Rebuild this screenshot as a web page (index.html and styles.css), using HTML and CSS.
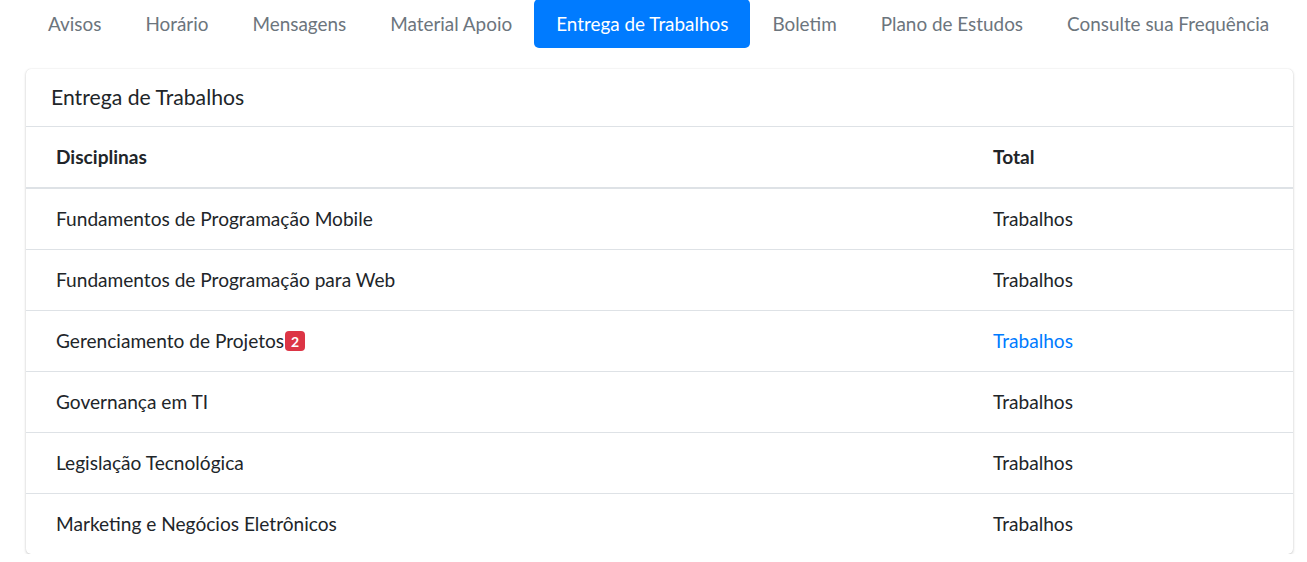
FILE: index.html
```html
<!DOCTYPE html>
<html lang="pt">
<head>
<meta charset="utf-8">
<title>Entrega de Trabalhos</title>
<link rel="stylesheet" href="styles.css">
</head>
<body>
<div class="page">
  <nav class="pills">
    <a class="pill">Avisos</a>
    <a class="pill">Horário</a>
    <a class="pill">Mensagens</a>
    <a class="pill">Material Apoio</a>
    <a class="pill active">Entrega de Trabalhos</a>
    <a class="pill">Boletim</a>
    <a class="pill">Plano de Estudos</a>
    <a class="pill">Consulte sua Frequência</a>
  </nav>
  <section class="card">
    <div class="card-header">Entrega de Trabalhos</div>
    <div class="table">
      <div class="row head">
        <div class="cell">Disciplinas</div>
        <div class="cell">Total</div>
      </div>
      <div class="row">
        <div class="cell">Fundamentos de Programação Mobile</div>
        <div class="cell">Trabalhos</div>
      </div>
      <div class="row">
        <div class="cell">Fundamentos de Programação para Web</div>
        <div class="cell">Trabalhos</div>
      </div>
      <div class="row">
        <div class="cell">Gerenciamento de Projetos<span class="badge">2</span></div>
        <div class="cell"><a class="link">Trabalhos</a></div>
      </div>
      <div class="row">
        <div class="cell">Governança em TI</div>
        <div class="cell">Trabalhos</div>
      </div>
      <div class="row">
        <div class="cell">Legislação Tecnológica</div>
        <div class="cell">Trabalhos</div>
      </div>
      <div class="row last">
        <div class="cell">Marketing e Negócios Eletrônicos</div>
        <div class="cell">Trabalhos</div>
      </div>
    </div>
  </section>
</div>
</body>
</html>
```

FILE: styles.css
```css
* { box-sizing: border-box; }
html, body { margin: 0; padding: 0; background: #ffffff; }
body {
  font-family: Lato, "Open Sans", "Liberation Sans", sans-serif;
  font-size: 19.1px;
  color: #212529;
}
.page {
  padding: 0 14px 0 26px;
}
.pills {
  display: flex;
  margin-top: -1px;
  height: 49px;
  margin-bottom: 21px;
}
.pill {
  display: flex;
  align-items: center;
  padding: 0 22px;
  height: 49px;
  font-size: 18.9px;
  color: #6c757d;
  border-radius: 5px;
  text-decoration: none;
  white-space: nowrap;
}
.pill.active {
  background: #007bff;
  color: #ffffff;
}
.card {
  background: #ffffff;
  border-radius: 5px;
  box-shadow: 0 0 1px rgba(0,0,0,.125), 0 1px 3px rgba(0,0,0,.2);
  overflow: hidden;
}
.card-header {
  height: 58px;
  padding: 0 25px 2px;
  display: flex;
  align-items: center;
  font-size: 21.2px;
  border-bottom: 1px solid #dee2e6;
}
.row {
  display: grid;
  grid-template-columns: 937px 1fr;
  height: 61px;
  border-bottom: 1px solid #dee2e6;
}
.row.head {
  height: 62px;
  border-bottom: 2px solid #dee2e6;
  font-weight: 700;
}
.row.last { border-bottom: none; height: 60px; }
.cell {
  display: flex;
  align-items: center;
  padding: 0 0 2px 30px;
}
.link { color: #007bff; text-decoration: none; }
.badge {
  display: inline-flex;
  align-items: center;
  justify-content: center;
  width: 20px;
  height: 20px;
  margin-left: 1px;
  margin-top: 2px;
  background: #dc3545;
  color: #fff;
  border-radius: 4px;
  font-size: 14px;
  font-weight: 700;
}
```
